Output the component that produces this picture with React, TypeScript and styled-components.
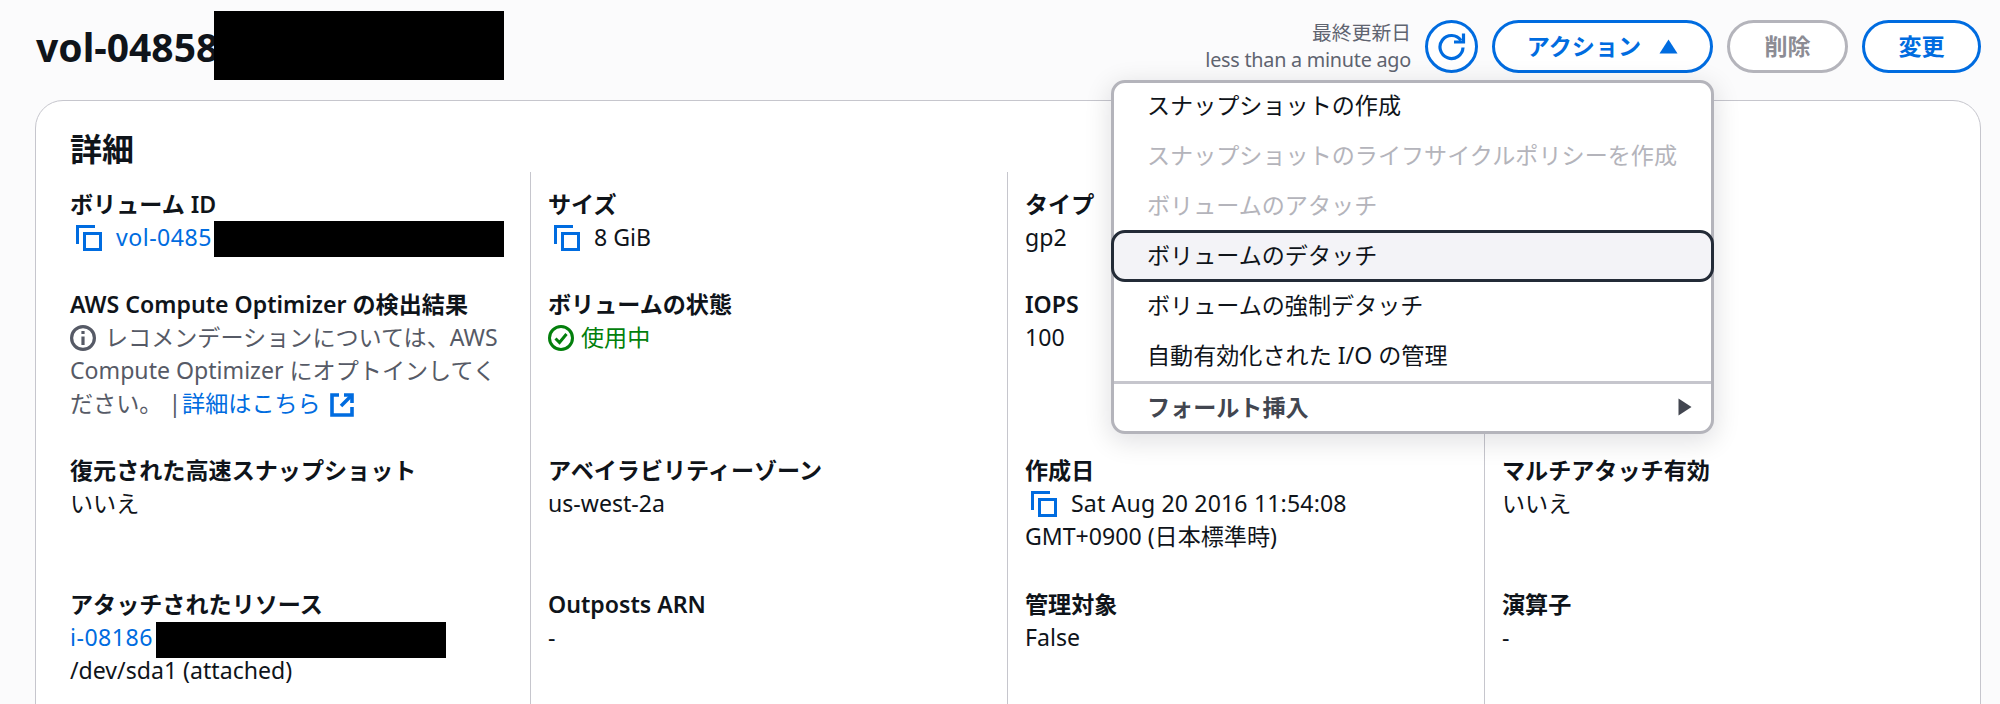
import styled, { createGlobalStyle } from "styled-components";

const GlobalStyle = createGlobalStyle`
    html, body {
        margin: 0;
        padding: 0;
        height: 704px;
        overflow: hidden;
        background: #fbfbfc;
        font-family: "Noto Sans", "Noto Sans CJK JP", sans-serif;
        font-size: 23.1px;
        line-height: 33px;
        color: #0f141a;
    }
`;

const Page = styled.div`
    height: 704px;
    padding: 0 19px 0 35px;
    overflow: hidden;
`;

const Header = styled.header`
    height: 100px;
    padding-left: 1px;
    display: flex;
    justify-content: space-between;
    align-items: flex-start;
`;

const Title = styled.h1`
    margin: 0;
    padding-top: 24px;
    font-size: 39px;
    line-height: 46px;
    font-weight: 700;
    white-space: nowrap;
`;

const Redaction = styled.span<{ $width: number; $height: number; $left?: number; $top?: number }>`
    display: inline-block;
    position: relative;
    top: ${(p) => p.$top ?? 0}px;
    width: ${(p) => p.$width}px;
    height: ${(p) => p.$height}px;
    margin: -${(p) => p.$height / 2}px 0 -${(p) => p.$height / 2}px ${(p) => p.$left ?? 0}px;
    vertical-align: middle;
    background: #000;
`;

const Actions = styled.div`
    display: flex;
    align-items: center;
    gap: 14px;
    padding-top: 19px;
`;

const Updated = styled.div`
    text-align: right;
    font-size: 19.8px;
    line-height: 27px;
    color: #5f6470;
`;

const UpdatedAgo = styled.div`
    letter-spacing: -0.25px;
`;

const RoundButton = styled.button`
    box-sizing: border-box;
    width: 53px;
    height: 53px;
    padding: 0;
    display: flex;
    align-items: center;
    justify-content: center;
    background: #fff;
    border: 3px solid #006ce0;
    border-radius: 50%;
    color: #006ce0;
`;

const Button = styled.button<{ $disabled?: boolean; $width: number }>`
    box-sizing: border-box;
    width: ${(p) => p.$width}px;
    height: 53px;
    padding: 0;
    display: flex;
    align-items: center;
    justify-content: center;
    gap: 18px;
    background: #fff;
    border: 3px solid ${(p) => (p.$disabled ? "#b4b4bb" : "#006ce0")};
    border-radius: 27px;
    color: ${(p) => (p.$disabled ? "#8c8c94" : "#006ce0")};
    font: inherit;
    font-weight: 600;
`;

const ActionWrap = styled.div`
    position: relative;
`;

const Menu = styled.div`
    position: absolute;
    top: 60px;
    right: -1px;
    z-index: 5;
    box-sizing: border-box;
    width: 603px;
    background: #fff;
    border: 3px solid #b4b4bb;
    border-radius: 14px;
    box-shadow: 0 6px 26px 2px rgba(0, 7, 22, 0.12);
`;

const MenuList = styled.div`
    margin-top: -2px;
`;

const MenuItem = styled.div<{ $disabled?: boolean; $active?: boolean }>`
    box-sizing: border-box;
    height: ${(p) => (p.$active ? 52 : 50)}px;
    margin: ${(p) => (p.$active ? "-1px -3px" : "0")};
    padding: 0 33px;
    display: flex;
    align-items: center;
    color: ${(p) => (p.$disabled ? "#b4b4bb" : "#0f141a")};
    background: ${(p) => (p.$active ? "#f3f3f7" : "transparent")};
    border: ${(p) => (p.$active ? "3px solid #232b37" : "0")};
    border-radius: 14px;
    position: relative;
`;

const MenuDivider = styled.div`
    height: 3px;
    background: #c6c6cd;
`;

const MenuGroup = styled.div`
    box-sizing: border-box;
    height: 47px;
    padding: 0 19px 0 33px;
    display: flex;
    align-items: center;
    justify-content: space-between;
    font-weight: 600;
    color: #424650;
`;

const Card = styled.section`
    box-sizing: border-box;
    min-height: 640px;
    padding: 24px 0 40px 34px;
    background: #fff;
    border: 1px solid #c6c6cd;
    border-radius: 28px;
`;

const CardTitle = styled.h2`
    margin: 0;
    height: 47px;
    font-size: 32px;
    line-height: 47px;
    font-weight: 700;
`;

const Grid = styled.div`
    display: grid;
    grid-template-columns: 460px 477px 477px 1fr;
    grid-template-rows: 100px 166px 134px auto;
`;

const Cell = styled.div<{ $divider?: boolean }>`
    box-sizing: border-box;
    padding: 16px 17px 17px ${(p) => (p.$divider ? 17 : 0)}px;
    border-left: ${(p) => (p.$divider ? "1px solid #c6c6cd" : "0")};
`;

const Label = styled.div`
    font-weight: 600;
`;

const Value = styled.div`
    white-space: nowrap;
`;

const CopyRow = styled.div<{ $spread?: boolean }>`
    padding-left: 6px;
    white-space: nowrap;
    letter-spacing: ${(p) => (p.$spread ? "0.15px" : "normal")};
`;

const WrapText = styled.div`
    color: #565a66;
`;

const Link = styled.a`
    color: #006ce0;
    text-decoration: none;
`;

const IdLink = styled(Link)`
    letter-spacing: 0.5px;
`;

const HelpLink = styled(Link)`
    margin-left: 1px;
`;

const StatusText = styled.div`
    display: flex;
    align-items: center;
    gap: 7px;
    color: #037f0c;
`;

const IconSlot = styled.svg<{ $gap?: number; $lead?: number }>`
    display: inline-block;
    vertical-align: -5px;
    margin-left: ${(p) => p.$lead ?? 0}px;
    margin-right: ${(p) => p.$gap ?? 0}px;
    flex: none;
`;

const CopyIcon = () => (
    <IconSlot $gap={14} width="26" height="26" viewBox="0 0 26 26" fill="none" stroke="#006ce0" strokeWidth="3">
        <path d="M1.5 19V1.5H19" />
        <rect x="8.5" y="8.5" width="16" height="16" />
    </IconSlot>
);

const InfoIcon = () => (
    <IconSlot $gap={9} width="26" height="26" viewBox="0 0 26 26" fill="none" stroke="#565a66" strokeWidth="3.2">
        <circle cx="13" cy="13" r="11.4" />
        <path d="M13 11.5V20" />
        <path d="M13 6v3" />
    </IconSlot>
);

const ExternalIcon = () => (
    <IconSlot $lead={3} width="24" height="24" viewBox="0 0 24 24" fill="none" stroke="#006ce0" strokeWidth="3.6">
        <path d="M9 2H2V22H22V14" />
        <path d="M11 13L21 3" />
        <path d="M14 2H22V10" />
    </IconSlot>
);

const CheckIcon = () => (
    <IconSlot width="26" height="26" viewBox="0 0 26 26" fill="none" stroke="#037f0c" strokeWidth="3">
        <circle cx="13" cy="13" r="11.5" />
        <path d="M7.5 13.5L11.5 17.5L18.5 9" />
    </IconSlot>
);

const RefreshIcon = () => (
    <svg width="29" height="29" viewBox="0 0 29 29" fill="none" stroke="#006ce0" strokeWidth="3.2">
        <path d="M24 8.5A11.5 11.5 0 1 0 26 15.5" />
        <path d="M26.5 1.5V10H17" />
    </svg>
);

const CaretUp = () => (
    <svg width="19" height="15" viewBox="0 0 19 15" fill="#006ce0">
        <path d="M9.5 0.5L18.5 14.5H0.5Z" />
    </svg>
);

const CaretRight = () => (
    <svg width="14" height="18" viewBox="0 0 14 18" fill="#424650">
        <path d="M0.5 0.5L13.5 9L0.5 17.5Z" />
    </svg>
);

const App = () => {
    return (
        <Page>
            <GlobalStyle />
            <Header>
                <Title>
                    vol-04858
                    <Redaction $width={290} $height={69} $left={-4} $top={-6} />
                </Title>
                <Actions>
                    <Updated>
                        <div>最終更新日</div>
                        <UpdatedAgo>less than a minute ago</UpdatedAgo>
                    </Updated>
                    <RoundButton>
                        <RefreshIcon />
                    </RoundButton>
                    <ActionWrap>
                        <Button $width={221}>
                            アクション
                            <CaretUp />
                        </Button>
                        <Menu>
                            <MenuList>
                                <MenuItem>スナップショットの作成</MenuItem>
                                <MenuItem $disabled>スナップショットのライフサイクルポリシーを作成</MenuItem>
                                <MenuItem $disabled>ボリュームのアタッチ</MenuItem>
                                <MenuItem $active>ボリュームのデタッチ</MenuItem>
                                <MenuItem>ボリュームの強制デタッチ</MenuItem>
                                <MenuItem>自動有効化された I/O の管理</MenuItem>
                            </MenuList>
                            <MenuDivider />
                            <MenuGroup>
                                フォールト挿入
                                <CaretRight />
                            </MenuGroup>
                        </Menu>
                    </ActionWrap>
                    <Button $width={121} $disabled>
                        削除
                    </Button>
                    <Button $width={119}>変更</Button>
                </Actions>
            </Header>
            <Card>
                <CardTitle>詳細</CardTitle>
                <Grid>
                    <Cell>
                        <Label>ボリューム ID</Label>
                        <CopyRow>
                            <CopyIcon />
                            <IdLink>vol-0485</IdLink>
                            <Redaction $width={290} $height={36} $left={2} $top={-1} />
                        </CopyRow>
                    </Cell>
                    <Cell $divider>
                        <Label>サイズ</Label>
                        <CopyRow>
                            <CopyIcon />8 GiB
                        </CopyRow>
                    </Cell>
                    <Cell $divider>
                        <Label>タイプ</Label>
                        <Value>gp2</Value>
                    </Cell>
                    <Cell $divider />

                    <Cell>
                        <Label>AWS Compute Optimizer の検出結果</Label>
                        <WrapText>
                            <InfoIcon />
                            レコメンデーションについては、AWS Compute Optimizer にオプトインしてください。 |
                            <HelpLink>詳細はこちら</HelpLink> <ExternalIcon />
                        </WrapText>
                    </Cell>
                    <Cell $divider>
                        <Label>ボリュームの状態</Label>
                        <StatusText>
                            <CheckIcon />
                            使用中
                        </StatusText>
                    </Cell>
                    <Cell $divider>
                        <Label>IOPS</Label>
                        <Value>100</Value>
                    </Cell>
                    <Cell $divider />

                    <Cell>
                        <Label>復元された高速スナップショット</Label>
                        <Value>いいえ</Value>
                    </Cell>
                    <Cell $divider>
                        <Label>アベイラビリティーゾーン</Label>
                        <Value>us-west-2a</Value>
                    </Cell>
                    <Cell $divider>
                        <Label>作成日</Label>
                        <CopyRow $spread>
                            <CopyIcon />
                            Sat Aug 20 2016 11:54:08
                        </CopyRow>
                        <Value>GMT+0900 (日本標準時)</Value>
                    </Cell>
                    <Cell $divider>
                        <Label>マルチアタッチ有効</Label>
                        <Value>いいえ</Value>
                    </Cell>

                    <Cell>
                        <Label>アタッチされたリソース</Label>
                        <Value>
                            <IdLink>i-08186</IdLink>
                            <Redaction $width={290} $height={36} $left={3} />
                        </Value>
                        <Value>/dev/sda1 (attached)</Value>
                    </Cell>
                    <Cell $divider>
                        <Label>Outposts ARN</Label>
                        <Value>-</Value>
                    </Cell>
                    <Cell $divider>
                        <Label>管理対象</Label>
                        <Value>False</Value>
                    </Cell>
                    <Cell $divider>
                        <Label>演算子</Label>
                        <Value>-</Value>
                    </Cell>
                </Grid>
            </Card>
        </Page>
    );
};

export default App;
